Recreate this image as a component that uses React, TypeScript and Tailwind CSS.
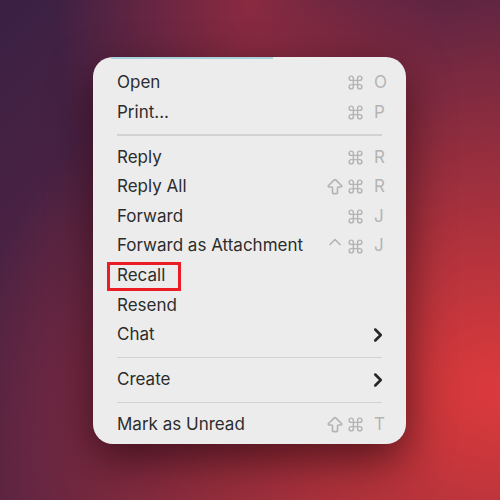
import React from 'react'
import { ArrowBigUp, ChevronRight, ChevronUp, Command } from 'lucide-react'

type Item = {
  label: string
  shift?: boolean
  ctrl?: boolean
  keyChar?: string
  submenu?: boolean
  highlight?: boolean
}

const groups: Item[][] = [
  [
    { label: 'Open', keyChar: 'O' },
    { label: 'Print...', keyChar: 'P' },
  ],
  [
    { label: 'Reply', keyChar: 'R' },
    { label: 'Reply All', shift: true, keyChar: 'R' },
    { label: 'Forward', keyChar: 'J' },
    { label: 'Forward as Attachment', ctrl: true, keyChar: 'J' },
    { label: 'Recall', highlight: true },
    { label: 'Resend' },
    { label: 'Chat', submenu: true },
  ],
  [{ label: 'Create', submenu: true }],
  [{ label: 'Mark as Unread', shift: true, keyChar: 'T' }],
]

const MenuRow: React.FC<{ item: Item }> = ({ item }) => (
  <div className="relative flex h-[29.6px] items-center justify-between">
    <span className="text-[17px] text-[#2c2c2c]">{item.label}</span>
    {item.highlight && (
      <div className="absolute left-[-10px] top-[1px] h-[29px] w-[74px] border-[3px] border-[#ec1c26]" />
    )}
    {item.keyChar && (
      <div className="flex items-center text-[17px] text-[#b4b4b4]">
        {item.shift && <ArrowBigUp className="mr-[2px] h-[20px] w-[20px]" strokeWidth={2} />}
        {item.ctrl && <ChevronUp className="mb-[8px] mr-[2px] h-[20px] w-[20px]" strokeWidth={2} />}
        <Command className="mr-[10px] h-[17px] w-[17px]" strokeWidth={2.1} />
        <span className="w-[8px]">{item.keyChar}</span>
      </div>
    )}
    {item.submenu && (
      <ChevronRight className="mr-[-7px] h-[22px] w-[22px] text-[#262626]" strokeWidth={2.8} />
    )}
  </div>
)

export default function App() {
  return (
    <div className="flex h-[500px] w-[500px] items-start justify-center bg-[radial-gradient(ellipse_at_100%_78%,#dc3a3c_0%,rgba(220,58,60,0)_75%),radial-gradient(ellipse_at_50%_0%,#8a2a40_0%,rgba(138,42,64,0)_55%),linear-gradient(135deg,#3a2044_0%,#5a2442_50%,#6e2638_100%)] pt-[57px] font-['Inter',sans-serif]">
      <div className="relative ml-[-1px] w-[313px] rounded-[20px] bg-[#ececec] pb-[4px] pl-[24px] pr-[24px] pt-[11px] shadow-[0_16px_44px_rgba(20,0,10,0.6)]">
        <div className="absolute left-[18px] top-0 h-[2px] w-[162px] bg-[#a9d3da]" />
        {groups.map((group, gi) => (
          <div key={gi}>
            {gi > 0 && (
              <div className="flex h-[15.4px] items-center">
                <div className="h-[1.5px] w-full bg-[#d2d2d2]" />
              </div>
            )}
            {group.map((item) => (
              <MenuRow key={item.label} item={item} />
            ))}
          </div>
        ))}
      </div>
    </div>
  )
}
